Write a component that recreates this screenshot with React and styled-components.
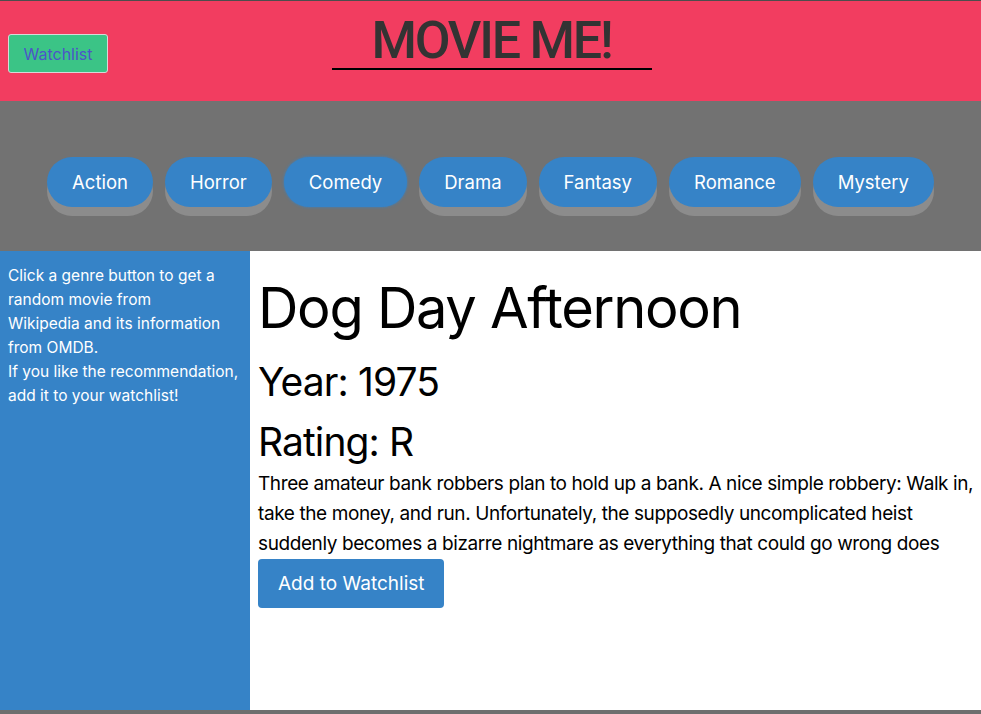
import React, { useState } from "react";
import styled, { createGlobalStyle } from "styled-components";

const GlobalStyle = createGlobalStyle`
  html, body {
    margin: 0;
    padding: 0;
    background: #6e6e6e;
  }
  body {
    font-family: Inter, "Noto Sans", sans-serif;
    border-top: 1px solid #4d4d4d;
    height: 710px;
  }
  * {
    box-sizing: border-box;
  }
`;

const genres = ["Action", "Horror", "Comedy", "Drama", "Fantasy", "Romance", "Mystery"];

const movie = {
  title: "Dog Day Afternoon",
  year: "1975",
  rating: "R",
  plot:
    "Three amateur bank robbers plan to hold up a bank. A nice simple robbery: Walk in, take the money, and run. Unfortunately, the supposedly uncomplicated heist suddenly becomes a bizarre nightmare as everything that could go wrong does",
};

function App() {
  const [active, setActive] = useState("Comedy");

  return (
    <Page>
      <GlobalStyle />
      <Header>
        <WatchlistButton>Watchlist</WatchlistButton>
        <Title>MOVIE ME!</Title>
      </Header>
      <GenreBar>
        {genres.map((g) => (
          <GenreButton key={g} $active={g === active} onClick={() => setActive(g)}>
            {g}
          </GenreButton>
        ))}
      </GenreBar>
      <Main>
        <Sidebar>
          Click a genre button to get a<br />
          random movie from
          <br />
          Wikipedia and its information
          <br />
          from OMDB.
          <br />
          If you like the recommendation,
          <br />
          add it to your watchlist!
        </Sidebar>
        <Content>
          <MovieTitle>{movie.title}</MovieTitle>
          <Detail>Year: {movie.year}</Detail>
          <Detail>Rating: {movie.rating}</Detail>
          <Plot>{movie.plot}</Plot>
          <AddButton>Add to Watchlist</AddButton>
        </Content>
      </Main>
    </Page>
  );
}

const Page = styled.div`
  display: flex;
  flex-direction: column;
  height: 710px;
`;

const Header = styled.header`
  height: 100px;
  background: #f23d60;
  display: grid;
  grid-template-columns: 1fr 320px 1fr;
  align-items: start;
  padding: 0 8px;
`;

const WatchlistButton = styled.button`
  justify-self: start;
  width: 100px;
  height: 39px;
  margin-top: 33px;
  background: #3bc486;
  color: #4b55c8;
  border: 1px solid #d8d8d8;
  border-radius: 3px;
  font-family: Inter, "Noto Sans", sans-serif;
  font-size: 16px;
  cursor: pointer;
`;

const Title = styled.h1`
  margin: 12px 0 0;
  border-bottom: 2px solid #000;
  text-align: center;
  font-family: Roboto, "Noto Sans", sans-serif;
  font-weight: 500;
  font-size: 52px;
  line-height: 55px;
  letter-spacing: -2.2px;
  color: #333333;
  transform: translateX(1px);
`;

const GenreBar = styled.nav`
  height: 150px;
  background: #727272;
  display: flex;
  justify-content: center;
  align-items: flex-start;
  gap: 12px;
  padding-top: 56px;
`;

const GenreButton = styled.button`
  height: 50px;
  padding: 0 25px;
  border: none;
  border-radius: 25px;
  background: #3683c7;
  color: #fff;
  font-family: Inter, "Noto Sans", sans-serif;
  font-size: 18.5px;
  cursor: pointer;
  box-shadow: ${(p) => (p.$active ? "0 0 3px #3683c7" : "0 9px 0 #8c8c8c")};
`;

const Main = styled.main`
  height: 460px;
  display: grid;
  grid-template-columns: 250px 1fr;
  background: #fff;
`;

const Sidebar = styled.aside`
  background: #3683c7;
  color: #fff;
  padding: 13px 8px;
  font-size: 15.5px;
  line-height: 24px;
`;

const Content = styled.section`
  padding: 0 0 0 8px;
  color: #000;
`;

const MovieTitle = styled.h2`
  margin: 22px 0 15px;
  font-size: 56px;
  font-weight: 400;
  line-height: 70px;
  letter-spacing: -1.3px;
`;

const Detail = styled.h3`
  margin: 0 0 12px;
  font-size: 39px;
  font-weight: 400;
  line-height: 48px;
  letter-spacing: -0.9px;

  & + & {
    margin-bottom: 3px;
  }
`;

const Plot = styled.p`
  margin: 0;
  font-size: 19px;
  line-height: 30px;
  letter-spacing: -0.4px;
`;

const AddButton = styled.button`
  height: 49px;
  padding: 0 20px;
  border: none;
  border-radius: 4px;
  background: #3683c7;
  color: #fff;
  font-family: Inter, "Noto Sans", sans-serif;
  font-size: 19px;
  cursor: pointer;
`;

export default App;
